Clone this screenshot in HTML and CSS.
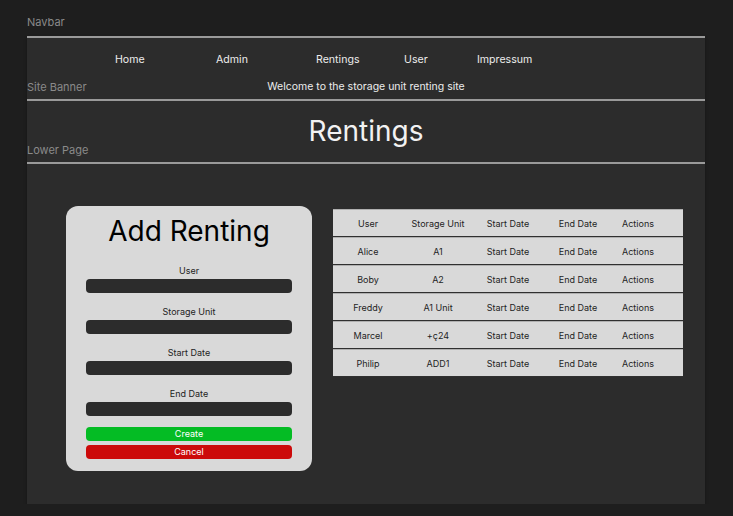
FILE: index.html
```html
<!DOCTYPE html>
<html lang="en">
<head>
<meta charset="utf-8">
<title>Rentings</title>
<link rel="stylesheet" href="styles.css">
</head>
<body>
<div class="page">
  <div class="frame-label top-label">Navbar</div>
  <div class="frame">
    <section class="nav-section">
      <nav class="nav">
        <a class="nav-item w-home">Home</a>
        <a class="nav-item w-admin">Admin</a>
        <a class="nav-item w-rentings">Rentings</a>
        <a class="nav-item w-user">User</a>
        <a class="nav-item">Impressum</a>
      </nav>
      <div class="label-row">
        <span class="frame-label">Site Banner</span>
        <span class="welcome">Welcome to the storage unit renting site</span>
      </div>
    </section>
    <section class="banner-section">
      <h1 class="page-title">Rentings</h1>
      <div class="label-row small">
        <span class="frame-label">Lower Page</span>
      </div>
    </section>
    <section class="lower">
      <div class="card">
        <h2 class="card-title">Add Renting</h2>
        <div class="fields">
          <div class="field"><label>User</label><div class="input"></div></div>
          <div class="field"><label>Storage Unit</label><div class="input"></div></div>
          <div class="field"><label>Start Date</label><div class="input"></div></div>
          <div class="field"><label>End Date</label><div class="input"></div></div>
        </div>
        <div class="btn create">Create</div>
        <div class="btn cancel">Cancel</div>
      </div>
      <div class="table">
        <div class="row"><span>User</span><span>Storage Unit</span><span>Start Date</span><span>End Date</span><span class="act">Actions</span></div>
        <div class="row"><span>Alice</span><span>A1</span><span>Start Date</span><span>End Date</span><span class="act">Actions</span></div>
        <div class="row"><span>Boby</span><span>A2</span><span>Start Date</span><span>End Date</span><span class="act">Actions</span></div>
        <div class="row"><span>Freddy</span><span>A1 Unit</span><span>Start Date</span><span>End Date</span><span class="act">Actions</span></div>
        <div class="row"><span>Marcel</span><span>+ç24</span><span>Start Date</span><span>End Date</span><span class="act">Actions</span></div>
        <div class="row"><span>Philip</span><span>ADD1</span><span>Start Date</span><span>End Date</span><span class="act">Actions</span></div>
      </div>
    </section>
  </div>
</div>
</body>
</html>
```

FILE: styles.css
```css
html, body {
  margin: 0;
  padding: 0;
  background: #1e1e1e;
  font-family: Inter, "Noto Sans", sans-serif;
}
.page {
  width: 678px;
  margin-left: 27px;
}
.frame-label {
  color: #8a8a8a;
  font-size: 11px;
  line-height: 13px;
}
.top-label {
  padding-top: 16px;
  height: 20px;
}
.frame {
  background: #2c2c2c;
  height: 468px;
  box-shadow: 0 2px 3px rgba(0, 0, 0, 0.35);
  display: flex;
  flex-direction: column;
}
.nav-section {
  border-top: 2px solid #9a9a9a;
  padding: 15px 0 5px;
}
.nav {
  display: flex;
  padding-left: 88px;
  height: 14px;
  align-items: center;
}
.nav-item {
  color: #ececec;
  font-size: 10.6px;
  line-height: 14px;
}
.w-home { width: 101px; }
.w-admin { width: 100px; }
.w-rentings { width: 88px; }
.w-user { width: 73px; }
.label-row {
  position: relative;
  margin-top: 13px;
  height: 14px;
  display: flex;
  align-items: center;
}
.label-row.small {
  margin-top: -1px;
  height: 12px;
}
.welcome {
  position: absolute;
  left: 0;
  right: 0;
  text-align: center;
  color: #ececec;
  font-size: 10.5px;
  line-height: 14px;
}
.banner-section {
  border-top: 2px solid #9a9a9a;
  padding: 16px 0 6px;
}
.page-title {
  margin: 0;
  text-align: center;
  color: #f2f2f2;
  font-weight: 400;
  font-size: 28px;
  line-height: 28px;
}
.lower {
  border-top: 2px solid #9a9a9a;
  display: flex;
  align-items: flex-start;
  padding: 42px 0 0 39px;
  gap: 21px;
}
.card {
  width: 206px;
  background: #d9d9d9;
  border-radius: 12px;
  padding: 8px 20px 12px;
  display: flex;
  flex-direction: column;
}
.card-title {
  margin: 0;
  text-align: center;
  font-weight: 400;
  font-size: 28px;
  line-height: 34px;
  color: #000;
}
.fields {
  margin-top: 17px;
  display: flex;
  flex-direction: column;
  gap: 13px;
}
.field {
  display: flex;
  flex-direction: column;
  gap: 2px;
}
.field label {
  text-align: center;
  font-size: 9px;
  line-height: 12px;
  color: #222;
}
.input {
  height: 14px;
  background: #2c2c2c;
  border-radius: 4px;
}
.btn {
  height: 14px;
  border-radius: 4px;
  color: #fff;
  font-size: 9px;
  line-height: 14px;
  text-align: center;
}
.create {
  margin-top: 11px;
  background: #04bc24;
}
.cancel {
  margin-top: 4px;
  background: #cc0a0a;
}
.table {
  margin-top: 3px;
  width: 350px;
  display: flex;
  flex-direction: column;
}
.row {
  height: 26px;
  display: grid;
  grid-template-columns: 70px 70px 70px 70px 70px;
  align-items: center;
  background: #d9d9d9;
  border-top: 1px solid #b0b0b0;
  border-bottom: 1px solid #303030;
  font-size: 9px;
  color: #1e1e1e;
}
.row span {
  text-align: center;
}
.row .act {
  padding-right: 20px;
}
```
